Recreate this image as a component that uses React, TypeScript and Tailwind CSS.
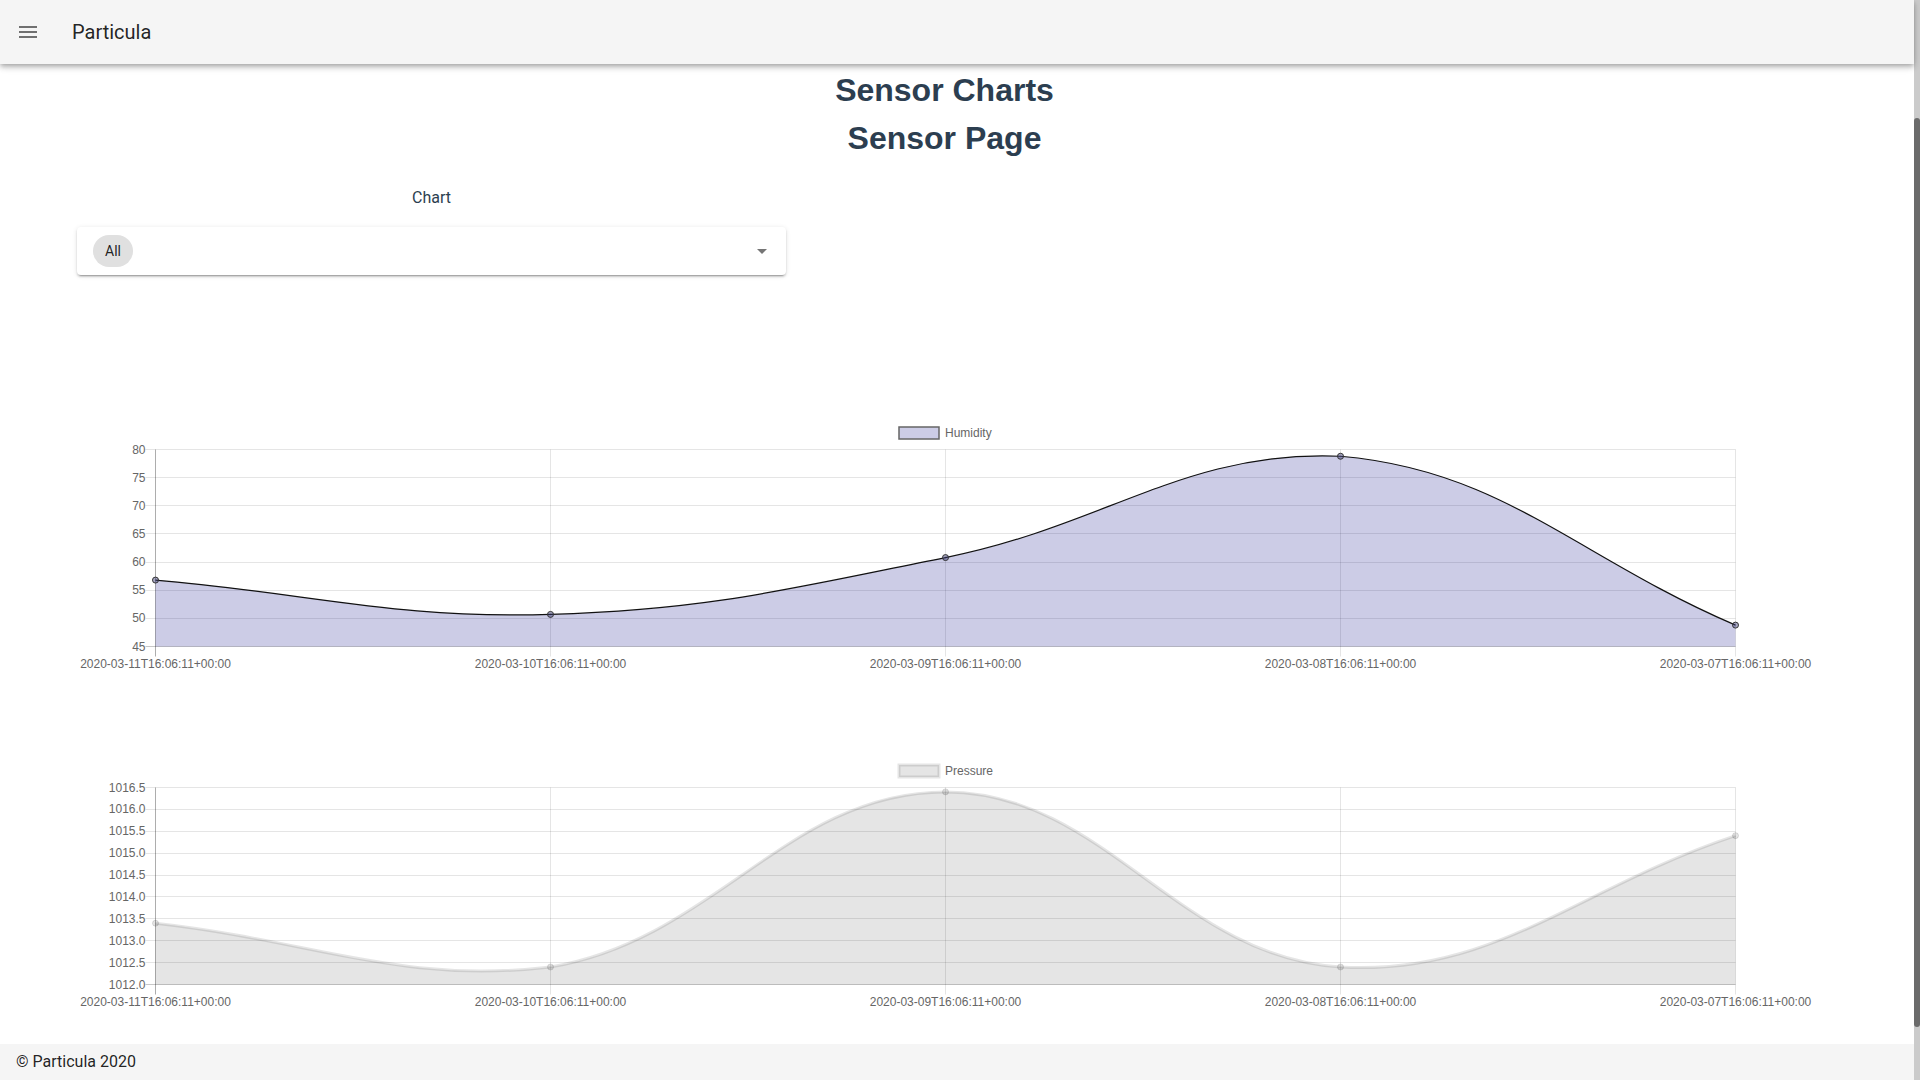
import React from "react";

type Pt = { x: number; y: number };
type Area = { left: number; right: number; top: number; bottom: number };

function splinePath(pts: Pt[], area: Area, t = 0.4): string {
  const clampX = (x: number) => Math.max(area.left, Math.min(area.right, x));
  const clampY = (y: number) => Math.max(area.top, Math.min(area.bottom, y));
  const cps = pts.map((p, i) => {
    const prev = pts[i - 1] ?? p;
    const next = pts[i + 1] ?? p;
    const d01 = Math.hypot(p.x - prev.x, p.y - prev.y);
    const d12 = Math.hypot(next.x - p.x, next.y - p.y);
    let s01 = d01 / (d01 + d12);
    let s12 = d12 / (d01 + d12);
    if (isNaN(s01)) s01 = 0;
    if (isNaN(s12)) s12 = 0;
    const fa = t * s01;
    const fb = t * s12;
    return {
      prev: { x: clampX(p.x - fa * (next.x - prev.x)), y: clampY(p.y - fa * (next.y - prev.y)) },
      next: { x: clampX(p.x + fb * (next.x - prev.x)), y: clampY(p.y + fb * (next.y - prev.y)) },
    };
  });
  let d = `M${pts[0].x},${pts[0].y}`;
  for (let i = 1; i < pts.length; i++) {
    const a = cps[i - 1].next;
    const b = cps[i].prev;
    d += ` C${a.x.toFixed(2)},${a.y.toFixed(2)} ${b.x.toFixed(2)},${b.y.toFixed(2)} ${pts[i].x},${pts[i].y.toFixed(2)}`;
  }
  return d;
}

const XS = [155.5, 550.5, 945.5, 1340.5, 1735.5];
const DATES = [
  "2020-03-11T16:06:11+00:00",
  "2020-03-10T16:06:11+00:00",
  "2020-03-09T16:06:11+00:00",
  "2020-03-08T16:06:11+00:00",
  "2020-03-07T16:06:11+00:00",
];

const FONT = "'Liberation Sans', Arial, Helvetica, sans-serif";

type ChartProps = {
  vbTop: number;
  height: number;
  top: number;
  bottom: number;
  min: number;
  max: number;
  step: number;
  decimals: number;
  values: number[];
  legend: string;
  legendY: number;
  fill: string;
  stroke: string;
  strokeWidth: number;
  pointFill: string;
  pointStroke: string;
  legendStroke: string;
  legendStrokeWidth: number;
};

function LineChart(p: ChartProps) {
  const left = 155.5;
  const right = 1735.5;
  const n = Math.round((p.max - p.min) / p.step);
  const yOf = (v: number) => p.top + ((p.max - v) / (p.max - p.min)) * (p.bottom - p.top);
  const ticks = Array.from({ length: n + 1 }, (_, i) => p.max - i * p.step);
  const pts: Pt[] = p.values.map((v, i) => ({ x: XS[i], y: yOf(v) }));
  const area = { left, right, top: p.top, bottom: p.bottom };
  const curve = splinePath(pts, area);
  const fillPath = `${curve} L${right},${p.bottom} L${left},${p.bottom} Z`;
  const grid = "rgba(0,0,0,0.1)";
  return (
    <svg
      width={1889}
      height={p.height}
      viewBox={`0 ${p.vbTop} 1889 ${p.height}`}
      className="block shrink-0"
    >
      {ticks.map((v, i) => {
        const y = Math.round(yOf(v) - 0.5) + 0.5;
        const isBottom = i === n;
        return (
          <line
            key={`h${i}`}
            x1={left - 10}
            x2={right}
            y1={y}
            y2={y}
            stroke={isBottom ? "rgba(0,0,0,0.22)" : grid}
            strokeWidth={1}
          />
        );
      })}
      {XS.map((x, i) => (
        <line
          key={`v${i}`}
          x1={x}
          x2={x}
          y1={p.top}
          y2={p.bottom + 10}
          stroke={i === 0 ? "rgba(0,0,0,0.32)" : grid}
          strokeWidth={1}
        />
      ))}
      {ticks.map((v, i) => (
        <text
          key={`yl${i}`}
          x={left - 10}
          y={Math.round(yOf(v)) - 0.5}
          textAnchor="end"
          dominantBaseline="central"
          fontFamily={FONT}
          fontSize={12}
          fill="#666"
        >
          {v.toFixed(p.decimals)}
        </text>
      ))}
      {XS.map((x, i) => (
        <text
          key={`xl${i}`}
          x={x}
          y={p.bottom + 17}
          textAnchor="middle"
          dominantBaseline="central"
          fontFamily={FONT}
          fontSize={12}
          fill="#666"
        >
          {DATES[i]}
        </text>
      ))}
      <rect
        x={899}
        y={p.legendY - 6}
        width={40}
        height={12}
        fill={p.fill}
        stroke={p.legendStroke}
        strokeWidth={p.legendStrokeWidth}
      />
      <text
        x={945}
        y={p.legendY}
        dominantBaseline="central"
        fontFamily={FONT}
        fontSize={12}
        fill="#666"
      >
        {p.legend}
      </text>
      <path d={fillPath} fill={p.fill} stroke="none" />
      <path d={curve} fill="none" stroke={p.stroke} strokeWidth={p.strokeWidth} />
      {pts.map((pt, i) => (
        <circle
          key={`p${i}`}
          cx={pt.x}
          cy={pt.y}
          r={3}
          fill={p.pointFill}
          stroke={p.pointStroke}
          strokeWidth={1}
        />
      ))}
    </svg>
  );
}

function MenuIcon() {
  return (
    <svg width={24} height={24} viewBox="0 0 24 24" className="block">
      <path d="M3,6H21V8H3V6M3,11H21V13H3V11M3,16H21V18H3V16Z" fill="rgba(0,0,0,0.54)" />
    </svg>
  );
}

function MenuDown() {
  return (
    <svg width={24} height={24} viewBox="0 0 24 24" className="block">
      <path d="M7,10L12,15L17,10H7Z" fill="rgba(0,0,0,0.54)" />
    </svg>
  );
}

export default function App() {
  return (
    <div
      className="flex h-screen w-full overflow-hidden bg-white"
      style={{ fontFamily: "Roboto, 'Liberation Sans', Arial, sans-serif" }}
    >
      <div className="flex min-w-0 flex-1 flex-col">
        <header className="relative z-10 flex h-16 shrink-0 items-center bg-[#f5f5f5] px-4 shadow-[0_2px_4px_-1px_rgba(0,0,0,0.2),0_4px_5px_0_rgba(0,0,0,0.14),0_1px_10px_0_rgba(0,0,0,0.12)]">
          <MenuIcon />
          <div className="ml-8 text-[20px] leading-none text-[rgba(0,0,0,0.87)] font-['Roboto',sans-serif]">
            Particula
          </div>
        </header>

        <main className="flex min-h-0 flex-1 flex-col overflow-hidden pr-[25px]">
          <div className="mt-[2px] flex flex-col items-center font-['Liberation_Sans',Arial,Helvetica,sans-serif] text-[32px] font-bold leading-[48px] text-[#2c3e50]">
            <h1>Sensor Charts</h1>
            <h1>Sensor Page</h1>
          </div>

          <div className="ml-[77px] mt-6 flex w-[709px] flex-col">
            <div className="h-6 text-center text-[16px] leading-6 text-[#2c3e50] font-['Roboto',sans-serif]">
              Chart
            </div>
            <div className="mt-[17px] flex h-12 items-center justify-between rounded bg-white pl-4 pr-3 shadow-[0_3px_1px_-2px_rgba(0,0,0,0.2),0_2px_2px_0_rgba(0,0,0,0.14),0_1px_5px_0_rgba(0,0,0,0.12)]">
              <div className="flex h-8 items-center rounded-full bg-[#e0e0e0] px-3 text-[14px] text-[rgba(0,0,0,0.87)] font-['Roboto',sans-serif]">
                All
              </div>
              <MenuDown />
            </div>
          </div>

          <div className="mt-[135px]">
            <LineChart
              vbTop={410}
              height={270}
              top={449.5}
              bottom={646.5}
              min={45}
              max={80}
              step={5}
              decimals={0}
              values={[56.8, 50.7, 60.8, 78.8, 48.8]}
              legend="Humidity"
              legendY={433}
              fill="rgba(0,0,128,0.2)"
              stroke="#111"
              strokeWidth={1.2}
              pointFill="rgba(60,60,120,0.45)"
              pointStroke="#333"
              legendStroke="#666"
              legendStrokeWidth={1.5}
            />
          </div>

          <div className="mt-[70px]">
            <LineChart
              vbTop={750}
              height={270}
              top={787.5}
              bottom={984.5}
              min={1012}
              max={1016.5}
              step={0.5}
              decimals={1}
              values={[1013.4, 1012.4, 1016.4, 1012.4, 1015.4]}
              legend="Pressure"
              legendY={771}
              fill="rgba(0,0,0,0.1)"
              stroke="rgba(0,0,0,0.1)"
              strokeWidth={3}
              pointFill="rgba(0,0,0,0.1)"
              pointStroke="rgba(0,0,0,0.12)"
              legendStroke="rgba(0,0,0,0.1)"
              legendStrokeWidth={3}
            />
          </div>
        </main>

        <footer className="flex h-9 shrink-0 items-center bg-[#f5f5f5] px-4 text-[16px] text-[rgba(0,0,0,0.87)] font-['Roboto',sans-serif]">
          © Particula 2020
        </footer>
      </div>

      <div className="flex w-[6px] shrink-0 flex-col bg-[#cbcbcb]">
        <div className="mt-[118px] h-[909px] rounded-[3px] bg-[#6b6b6b]" />
      </div>
    </div>
  );
}
